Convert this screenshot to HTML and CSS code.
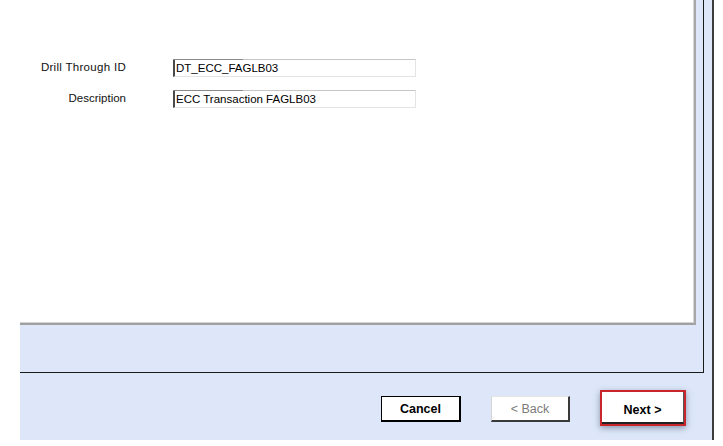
FILE: index.html
```html
<!DOCTYPE html>
<html>
<head>
<meta charset="utf-8">
<link rel="stylesheet" href="styles.css">
</head>
<body>
<div class="frame">
  <div class="inner">
    <div class="panel">
      <div class="form">
        <div class="label label-wide">Drill Through ID</div>
        <div class="field">DT_ECC_FAGLB03</div>
        <div class="label">Description</div>
        <div class="field">ECC Transaction FAGLB03</div>
      </div>
    </div>
  </div>
  <div class="footer">
    <div class="btn btn-cancel">Cancel</div>
    <div class="btn btn-back">&lt; Back</div>
    <div class="focus"><div class="btn btn-next">Next &gt;</div></div>
  </div>
</div>
</body>
</html>
```
FILE: styles.css
```css
html, body {
  margin: 0;
  padding: 0;
  background: #ffffff;
  font-family: "Liberation Sans", Arial, sans-serif;
}
.frame {
  margin-left: 20px;
  width: 692px;
  height: 440px;
  background: #dde7f9;
  border-right: 2px solid #3c3c3c;
}
.inner {
  width: 683px;
  height: 372px;
  border-right: 1px solid #1a1a1a;
  border-bottom: 1px solid #1a1a1a;
}
.panel {
  width: 674px;
  height: 323px;
  background: #ffffff;
  border-right: 2px solid #a8a8a8;
  border-bottom: 2px solid #a0a0a0;
  box-shadow: inset -1px -1px 0 #d4d4d4;
  box-sizing: content-box;
}
.form {
  display: grid;
  grid-template-columns: 106px 243px;
  column-gap: 47px;
  row-gap: 13px;
  padding-top: 59px;
  align-items: center;
}
.label {
  text-align: right;
  font-size: 11.5px;
  color: #111;
  margin-top: -3px;
}
.label-wide {
  letter-spacing: 0.3px;
}
.field {
  position: relative;
  box-sizing: border-box;
  height: 18px;
  border-top: 1px solid #c6c6c6;
  border-left: 2px solid #4a4a4a;
  border-right: 1px solid #e4e4e4;
  border-bottom: 1px solid #e4e4e4;
  font-size: 11.5px;
  line-height: 16px;
  padding-left: 1px;
  color: #000;
  white-space: nowrap;
}
.field::before {
  content: "";
  position: absolute;
  left: -2px;
  top: -1px;
  width: 70px;
  height: 1px;
  background: #8a8a8a;
}
.footer {
  height: 67px;
  box-sizing: border-box;
  padding-top: 5px;
  padding-right: 26px;
  display: flex;
  justify-content: flex-end;
  align-items: center;
  gap: 30px;
}
.btn {
  box-sizing: border-box;
  height: 26px;
  background: #ffffff;
  font-size: 12.5px;
  font-weight: bold;
  display: flex;
  align-items: center;
  justify-content: center;
  color: #000;
}
.btn-cancel {
  width: 80px;
  border-top: 1px solid #000;
  border-left: 1px solid #000;
  border-right: 2px solid #000;
  border-bottom: 2px solid #000;
}
.btn-back {
  width: 79px;
  color: #7c7c7c;
  font-weight: normal;
  border-top: 1px solid #e6e6e6;
  border-left: 1px solid #d6d6d6;
  border-right: 2px solid #3a3a3a;
  border-bottom: 2px solid #3a3a3a;
}
.focus {
  width: 86px;
  height: 36px;
  box-sizing: border-box;
  border: 2px solid #c9262b;
  box-shadow: 0 2px 6px rgba(70, 80, 110, 0.55);
  margin-top: -2px;
}
.btn-next {
  width: 82px;
  height: 32px;
  border-right: 1px solid #555;
  border-bottom: 2px solid #222;
  padding-top: 5px;
}
```
